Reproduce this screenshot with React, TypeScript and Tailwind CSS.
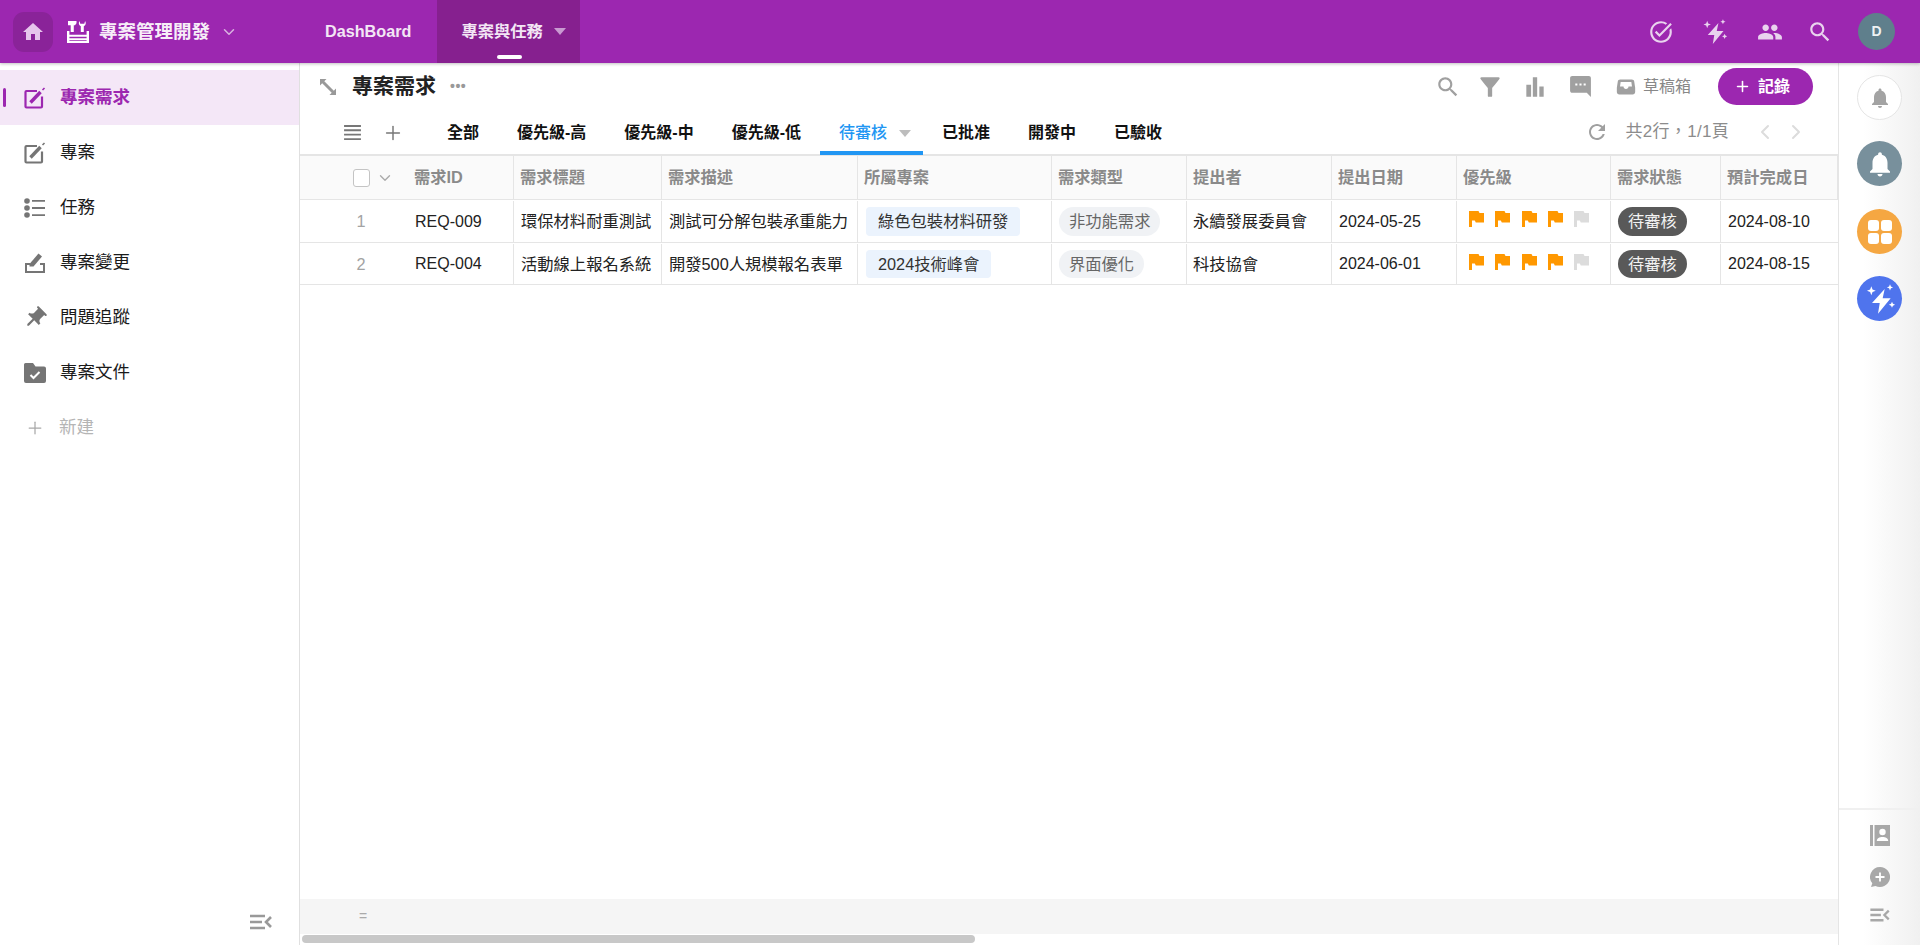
import React from "react";
import { ChevronDown, ChevronLeft, ChevronRight, Plus } from "lucide-react";

/* -------------------------------------------------------------------------- */
/*                                    Icons                                   */
/* -------------------------------------------------------------------------- */
type IconProps = { className?: string };

const Mat = ({ d, className }: IconProps & { d: string }) => (
  <svg viewBox="0 0 24 24" fill="currentColor" className={className}>
    <path d={d} />
  </svg>
);

const HomeIcon = ({ className }: IconProps) => <Mat className={className} d="M10 20v-6h4v6h5v-8h3L12 3 2 12h3v8z" />;
const TaskAlt = ({ className }: IconProps) => (
  <Mat
    className={className}
    d="M22 5.18 10.59 16.6l-4.24-4.24 1.41-1.41 2.83 2.83 10-10L22 5.18zm-2.21 5.04c.13.57.21 1.17.21 1.78 0 4.42-3.58 8-8 8s-8-3.58-8-8 3.58-8 8-8c1.58 0 3.04.46 4.28 1.25l1.44-1.44C16.1 2.67 14.13 2 12 2 6.48 2 2 6.48 2 12s4.48 10 10 10 10-4.48 10-10c0-1.19-.22-2.33-.6-3.39l-1.61 1.61z"
  />
);
const PeopleIcon = ({ className }: IconProps) => (
  <Mat
    className={className}
    d="M16 11c1.66 0 2.99-1.34 2.99-3S17.66 5 16 5c-1.66 0-3 1.34-3 3s1.34 3 3 3zm-8 0c1.66 0 2.99-1.34 2.99-3S9.66 5 8 5C6.34 5 5 6.34 5 8s1.34 3 3 3zm0 2c-2.33 0-7 1.17-7 3.5V19h14v-2.5c0-2.33-4.67-3.5-7-3.5zm8 0c-.29 0-.62.02-.97.05 1.16.84 1.97 1.97 1.97 3.45V19h6v-2.5c0-2.33-4.67-3.5-7-3.5z"
  />
);
const SearchIcon = ({ className }: IconProps) => (
  <Mat
    className={className}
    d="M15.5 14h-.79l-.28-.27C15.41 12.59 16 11.11 16 9.5 16 5.91 13.09 3 9.5 3S3 5.91 3 9.5 5.91 16 9.5 16c1.61 0 3.09-.59 4.23-1.57l.27.28v.79l5 4.99L20.49 19l-4.99-5zm-6 0C7.01 14 5 11.99 5 9.5S7.01 5 9.5 5 14 7.01 14 9.5 11.99 14 9.5 14z"
  />
);
const FilterIcon = ({ className }: IconProps) => (
  <Mat
    className={className}
    d="M3.3 4.6C5.5 7.4 10 13 10 13v7.2c0 .5.3.8.8.8h2.4c.5 0 .8-.3.8-.8V13s4.5-5.6 6.7-8.4c.5-.7.1-1.6-.8-1.6H4.1c-.9 0-1.3.9-.8 1.6z"
  />
);
const BarsIcon = ({ className }: IconProps) => <Mat className={className} d="M4 10h4.4v11H4zM10 3h4v18h-4zm6 8.5h4V21h-4z" />;
const ChatIcon = ({ className }: IconProps) => (
  <svg viewBox="0 0 24 24" fill="currentColor" className={className}>
    <path d="M4 2h16c1.1 0 2 .9 2 2l.01 18-4-4H4c-1.1 0-2-.9-2-2V4c0-1.1.9-2 2-2zm3 7v2h2V9H7zm4 0v2h2V9h-2zm4 0v2h2V9h-2z" fillRule="evenodd" />
  </svg>
);
const TrayIcon = ({ className }: IconProps) => (
  <svg viewBox="0 0 24 24" fill="currentColor" className={className}>
    <path d="M5 3h14c1.6 0 2.6 1 2.8 2.2L23 13v5c0 1.7-1.3 3-3 3H4c-1.7 0-3-1.3-3-3v-5l1.2-7.800C2.400 4 3.400 3 5 3zm.600 3L4.800 11.500H9c0 1.600 1.300 2.800 3 2.800s3-1.200 3-2.800h4.200L18.400 6H5.600z" fillRule="evenodd" />
  </svg>
);
const RefreshIcon = ({ className }: IconProps) => (
  <Mat
    className={className}
    d="M17.65 6.35C16.2 4.9 14.21 4 12 4c-4.42 0-7.99 3.58-7.99 8s3.57 8 7.99 8c3.73 0 6.84-2.55 7.73-6h-2.08c-.82 2.33-3.04 4-5.65 4-3.31 0-6-2.69-6-6s2.69-6 6-6c1.66 0 3.14.69 4.22 1.78L13 11h7V4l-2.35 2.35z"
  />
);
const BellIcon = ({ className }: IconProps) => (
  <Mat
    className={className}
    d="M12 22c1.100 0 2-.9 2-2h-4c0 1.100.89 2 2 2zm6-6v-5c0-3.070-1.640-5.640-4.500-6.320V4c0-.83-.67-1.500-1.500-1.500s-1.500.67-1.500 1.500v.68C7.630 5.360 6 7.920 6 11v5l-2 2v1h16v-1l-2-2z"
  />
);
const BoltSparkIcon = ({ className }: IconProps) => (
  <svg viewBox="0 0 24 24" fill="currentColor" className={className}>
    <path d="M10.500 23 11.800 15H6L15.500 4.500 14 11.500H20z" />
    <path d="M5.500 2.500l.9 2.400 2.400.9-2.400.9-.9 2.400-.9-2.400-2.400-.9 2.400-.9zM19.500 1l.7 1.600 1.600.7-1.600.7-.7 1.600-.7-1.600-1.600-.7 1.600-.7zM21 14l.7 1.600 1.600.7-1.600.7-.7 1.600-.7-1.600-1.600-.7 1.600-.7z" />
  </svg>
);
const FlagIcon = ({ className }: IconProps) => (
  <svg viewBox="0 0 15 16" fill="currentColor" className={className}>
    <path d="M0 0h9.500l1 2H15v9.500H6.800l-1-2H3V16H0z" />
  </svg>
);
const EditIcon = ({ className }: IconProps) => (
  <svg viewBox="0 0 22 22" fill="none" stroke="currentColor" className={className}>
    <path d="M13 4H2.500a1 1 0 0 0-1 1v14.500a1 1 0 0 0 1 1H17a1 1 0 0 0 1-1V9.500" strokeWidth="2.200" />
    <path d="M6.500 15.500 16.500 5" strokeWidth="3.400" />
    <path d="M18.500 3 20.500 1" strokeWidth="1.600" />
  </svg>
);
const ListIcon = ({ className }: IconProps) => (
  <svg viewBox="0 0 22 20" fill="currentColor" className={className}>
    <circle cx="3" cy="3" r="2.800" />
    <circle cx="3" cy="10" r="2.800" />
    <circle cx="3" cy="17" r="2.800" />
    <path d="M8 2h13v1.800H8zM8 9.100h13v1.800H8zM8 16.200h13V18H8z" />
  </svg>
);
const ChangeIcon = ({ className }: IconProps) => (
  <svg viewBox="0 0 22 22" fill="currentColor" className={className}>
    <path d="M1 11h5.500v2H3v6h16v-6h-3v-2h5v10H1z" />
    <path d="M5.500 14.500V12L14.500 1.500l3.500 3-8.500 10z" />
  </svg>
);
const PinIcon = ({ className }: IconProps) => (
  <svg viewBox="0 0 24 24" fill="currentColor" className={className}>
    <path
      transform="rotate(45 12 12)"
      d="M16 9V4h1c.55 0 1-.45 1-1s-.45-1-1-1H7c-.55 0-1 .45-1 1s.45 1 1 1h1v5c0 1.660-1.340 3-3 3v2h5.970v7l1 1 1-1v-7H19v-2c-1.660 0-3-1.340-3-3z"
    />
  </svg>
);
const FolderCheckIcon = ({ className }: IconProps) => (
  <svg viewBox="0 0 22 20" fill="none" className={className}>
    <path d="M1.500 0H9l2.500 3.500H20a2 2 0 0 1 2 2V18a2 2 0 0 1-2 2H2a2 2 0 0 1-2-2V1.500A1.500 1.500 0 0 1 1.500 0z" fill="currentColor" />
    <path d="M6.500 12l3 3 6-6" stroke="#fff" strokeWidth="2" />
  </svg>
);
const CollapseIcon = ({ className }: IconProps) => (
  <svg viewBox="0 0 22 16" fill="none" stroke="currentColor" strokeWidth="2.600" className={className}>
    <path d="M0 2h15M0 8h12M0 14h15M21 3l-5 5 5 5" />
  </svg>
);
const LogoIcon = ({ className }: IconProps) => (
  <svg viewBox="0 0 22 22" fill="currentColor" className={className}>
    <path d="M1 0h8.500v2.200L8 4.200H6.800V11H3.700V4.200H1z" />
    <path d="M12.500 0c-1.200 2-.8 4.200 1.300 5.300V11h3V5.300c2.100-1.100 2.500-3.300 1.300-5.300l-.8 2.800h-4z" />
    <path d="M0 10h2.400v3.800h17.200V10H22v12H0zm2.400 5.800v1.400h17.200v-1.400zm0 3.200v.8h17.200V19z" fillRule="evenodd" />
  </svg>
);
const ContactIcon = ({ className }: IconProps) => (
  <svg viewBox="0 0 20 21" className={className}>
    <path d="M0 0h3v21H0zM4.500 0H20v21H4.500z" fill="currentColor" />
    <circle cx="12.500" cy="7" r="3.200" fill="#fff" />
    <path d="M6.800 16c0-2.800 2.600-4 5.700-4s5.700 1.200 5.700 4z" fill="#fff" />
  </svg>
);
const AddChatIcon = ({ className }: IconProps) => (
  <svg viewBox="0 0 20 20" className={className}>
    <path d="M10 0a10 10 0 1 1-4.500 18.900L1 20l1.300-3.700A10 10 0 0 1 10 0z" fill="currentColor" />
    <path d="M10 5.500v9M5.500 10h9" stroke="#fff" strokeWidth="1.800" />
  </svg>
);
const ExpandIcon = ({ className }: IconProps) => (
  <svg viewBox="0 0 18 18" fill="currentColor" className={className}>
    <path d="M1 1h6.500L5.300 3.200l9.500 9.500L17 10.500V17h-6.500l2.200-2.200-9.500-9.500L1 7.500z" />
  </svg>
);

/* -------------------------------------------------------------------------- */
/*                                    Data                                    */
/* -------------------------------------------------------------------------- */
const sideItems = [
  { label: "專案", Icon: EditIcon, iconClass: "mr-[14px] h-[22px] w-[22px]" },
  { label: "任務", Icon: ListIcon, iconClass: "mr-[14px] h-[22px] w-[22px]" },
  { label: "專案變更", Icon: ChangeIcon, iconClass: "mr-[14px] h-[22px] w-[22px]" },
  { label: "問題追蹤", Icon: PinIcon, iconClass: "-ml-[2px] mr-[12px] h-[26px] w-[26px]" },
  { label: "專案文件", Icon: FolderCheckIcon, iconClass: "mr-[14px] h-[22px] w-[22px]" },
];

const headers = [
  { label: "需求標題", width: "w-[148px]" },
  { label: "需求描述", width: "w-[196px]" },
  { label: "所屬專案", width: "w-[194px]" },
  { label: "需求類型", width: "w-[135px]" },
  { label: "提出者", width: "w-[145px]" },
  { label: "提出日期", width: "w-[125px]" },
  { label: "優先級", width: "w-[154px]" },
  { label: "需求狀態", width: "w-[110px]" },
  { label: "預計完成日", width: "w-[117px]" },
];

const rows = [
  {
    no: 1,
    id: "REQ-009",
    title: "環保材料耐重測試",
    desc: "測試可分解包裝承重能力",
    project: "綠色包裝材料研發",
    type: "非功能需求",
    owner: "永續發展委員會",
    date: "2024-05-25",
    due: "2024-08-10",
  },
  {
    no: 2,
    id: "REQ-004",
    title: "活動線上報名系統",
    desc: "開發500人規模報名表單",
    project: "2024技術峰會",
    type: "界面優化",
    owner: "科技協會",
    date: "2024-06-01",
    due: "2024-08-15",
  },
];

const tabsBefore = ["全部", "優先級-高", "優先級-中", "優先級-低"];
const tabsAfter = ["已批准", "開發中", "已驗收"];

const FONT = "font-['Liberation_Sans','Noto_Sans_CJK_TC',sans-serif]";

const App = () => {
  return (
    <div className={`flex h-screen w-full flex-col overflow-hidden bg-white ${FONT}`}>
      {/* top bar starts */}
      <header className="relative z-10 flex h-[63px] shrink-0 items-stretch bg-[#9c27b0] pl-[13px] pr-[25px] shadow-[0_1px_3px_rgba(0,0,0,0.25)]">
        <div className="flex items-center">
          <div className="flex h-10 w-10 items-center justify-center rounded-[11px] bg-[#8a2399]">
            <HomeIcon className="h-6 w-6 text-[#e6c5ec]" />
          </div>
          <LogoIcon className="ml-[14px] h-[22px] w-[22px] text-white" />
          <span className="ml-[10px] text-[18.500px] font-bold text-[#f7eef8]">專案管理開發</span>
          <ChevronDown className="ml-[10px] h-[18px] w-[18px] text-[#d9b3e0]" strokeWidth={2} />
        </div>
        <nav className="ml-[87px] flex items-stretch">
          <div className="flex items-center text-[16.200px] font-bold text-[#f3e6f5]">DashBoard</div>
          <div className="relative ml-[26px] flex w-[143px] items-center bg-[#86208f] pl-[24px] text-[16.300px] font-bold text-[#f3e6f5]">
            專案與任務
            <span className="ml-[11px] h-0 w-0 border-x-[6px] border-t-[7px] border-x-transparent border-t-[#c99ad1]" />
            <span className="absolute bottom-[4px] left-[60px] h-1 w-[25px] rounded-full bg-white" />
          </div>
        </nav>
        <div className="ml-auto flex items-center text-[#e9d3ee]">
          <TaskAlt className="h-[26px] w-[26px]" />
          <BoltSparkIcon className="ml-[27px] h-[27px] w-[27px]" />
          <PeopleIcon className="ml-[29px] h-[26px] w-[26px]" />
          <SearchIcon className="ml-[24px] h-[26px] w-[26px]" />
          <div className="ml-[25px] flex h-[37px] w-[37px] items-center justify-center rounded-full bg-[#5f7f8c] text-[14px] font-bold text-[#eef2f3]">
            D
          </div>
        </div>
      </header>
      {/* top bar ends */}

      <div className="flex min-h-0 flex-1">
        {/* sidebar starts */}
        <aside className="flex w-[300px] shrink-0 flex-col border-r border-[#e0e0e0] pt-[7px]">
          <div className="relative flex h-[55px] items-center bg-[#f4e7f7] pl-[24px] text-[17.500px] font-bold text-[#9c27b0]">
            <span className="absolute left-[3px] top-[18px] h-[19px] w-[3px] rounded-full bg-[#9c27b0]" />
            <EditIcon className="mr-[14px] h-[22px] w-[22px]" />
            專案需求
          </div>
          {sideItems.map(({ label, Icon, iconClass }) => (
            <div key={label} className="flex h-[55px] items-center pl-[24px] text-[17.500px] text-[#1a1a1a]">
              <Icon className={`text-[#757575] ${iconClass}`} />
              {label}
            </div>
          ))}
          <div className="flex h-[55px] items-center pl-[25px] text-[17.500px] text-[#b5b5b5]">
            <Plus className="mr-[14px] h-[20px] w-[20px] text-[#a8a8a8]" strokeWidth={1.5} />
            新建
          </div>
          <div className="mt-auto flex justify-end pb-[15px] pr-[27px]">
            <CollapseIcon className="h-[16px] w-[22px] text-[#999]" />
          </div>
        </aside>
        {/* sidebar ends */}

        {/* content starts */}
        <main className="flex min-w-0 flex-1 flex-col">
          <div className="flex h-[42px] items-center pl-[19px] pr-[25px] pt-[5px]">
            <ExpandIcon className="h-[18px] w-[18px] text-[#999]" />
            <span className="-mt-[2px] ml-[15px] text-[21px] font-bold leading-none text-[#222]">專案需求</span>
            <span className="-mt-[2px] ml-[14px] text-[14px] font-bold leading-none tracking-[0.5px] text-[#999]">•••</span>
            <div className="ml-auto flex items-center text-[#a0a0a0]">
              <SearchIcon className="-mr-[1px] h-[26px] w-[26px]" />
              <FilterIcon className="ml-[17px] h-[26px] w-[26px]" />
              <BarsIcon className="ml-[19px] h-[26px] w-[26px]" />
              <ChatIcon className="ml-[20px] h-[25px] w-[25px]" />
              <TrayIcon className="ml-[23px] h-[20px] w-[20px]" />
              <span className="ml-[7px] text-[16px] text-[#888]">草稿箱</span>
              <button className="ml-[27px] flex h-[37px] w-[95px] items-center justify-center gap-[7px] rounded-full bg-[#9c27b0] pr-[7px] text-[16px] font-bold text-white">
                <Plus className="h-[17px] w-[17px]" strokeWidth={2.2} />
                記錄
              </button>
            </div>
          </div>

          {/* tabs starts */}
          <div className="flex h-[51px] items-stretch border-b-2 border-[#e5e5e5] pr-[30px]">
            <div className="flex w-[128px] items-center pl-[43px] pt-[6px]">
              <svg viewBox="0 0 18 16" fill="currentColor" className="h-[15px] w-[19px] text-[#777]">
                <path d="M0 0h18v2H0zM0 4.600h18v2H0zM0 9.300h18v2H0zM0 14h18v2H0z" />
              </svg>
              <Plus className="ml-[20px] h-[22px] w-[22px] text-[#777]" strokeWidth={1.6} />
            </div>
            {tabsBefore.map((tab) => (
              <div key={tab} className="flex items-center px-[19px] pt-[7px] text-[16px] font-bold text-[#111]">
                {tab}
              </div>
            ))}
            <div className="relative flex w-[103px] items-center pl-[19px] pt-[7px] text-[16px] font-medium text-[#2196f3]">
              待審核
              <span className="ml-[12px] h-0 w-0 border-x-[6px] border-t-[7px] border-x-transparent border-t-[#bdbdbd]" />
              <span className="absolute bottom-[-1px] left-0 h-1 w-full bg-[#2196f3]" />
            </div>
            {tabsAfter.map((tab) => (
              <div key={tab} className="flex items-center px-[19px] pt-[7px] text-[16px] font-bold text-[#111]">
                {tab}
              </div>
            ))}
            <div className="ml-auto flex items-center pt-[5px] text-[#a0a0a0]">
              <RefreshIcon className="h-[24px] w-[24px]" />
              <span className="ml-[17px] text-[17px] tracking-[0.3px] text-[#8c8c8c]">共2行，1/1頁</span>
              <ChevronLeft className="ml-[24px] h-[24px] w-[24px] text-[#dcdcdc]" strokeWidth={2} />
              <ChevronRight className="ml-[7px] h-[24px] w-[24px] text-[#dcdcdc]" strokeWidth={2} />
            </div>
          </div>
          {/* tabs ends */}

          {/* table starts */}
          <div className="min-h-0 flex-1">
            <div className="flex h-[43px] bg-[#fafafa]">
              <div className="flex w-[214px] shrink-0 items-center border-r border-[#e5e5e5] pl-[53px]">
                <span className="h-[18px] w-[17px] rounded-[3px] border border-[#c4c4c4] bg-white" />
                <ChevronDown className="ml-[6px] h-[18px] w-[18px] text-[#aaa]" strokeWidth={1.8} />
                <span className="ml-[20px] text-[16.300px] font-bold text-[#8a8a8a]">需求ID</span>
              </div>
              {headers.map((h) => (
                <div
                  key={h.label}
                  className={`flex shrink-0 items-center border-r border-[#e5e5e5] pl-[6px] text-[16.300px] font-bold text-[#8a8a8a] ${h.width}`}
                >
                  {h.label}
                </div>
              ))}
            </div>
            {rows.map((row) => (
              <div key={row.id} className="flex h-[43px] border-t border-[#e5e5e5] pt-[1px] text-[16.300px] text-[#222] last:border-b">
                <div className="flex w-[214px] shrink-0 items-center border-r border-[#e5e5e5]">
                  <span className="w-[124px] pr-[2px] text-center text-[#a3a3a3]">{row.no}</span>
                  <span className="-ml-[9px] text-[16px]">{row.id}</span>
                </div>
                <div className="flex w-[148px] shrink-0 items-center border-r border-[#e5e5e5] pl-[7px]">{row.title}</div>
                <div className="flex w-[196px] shrink-0 items-center border-r border-[#e5e5e5] pl-[7px]">{row.desc}</div>
                <div className="flex w-[194px] shrink-0 items-center border-r border-[#e5e5e5] pl-[8px]">
                  <span className="rounded-[4px] bg-[#ebf3fd] px-[12px] py-[2px] text-[#333]">{row.project}</span>
                </div>
                <div className="flex w-[135px] shrink-0 items-center border-r border-[#e5e5e5] pl-[7px]">
                  <span className="rounded-full bg-[#f0f2f5] px-[10px] py-[2px] text-[#666]">{row.type}</span>
                </div>
                <div className="flex w-[145px] shrink-0 items-center border-r border-[#e5e5e5] pl-[6px]">{row.owner}</div>
                <div className="flex w-[125px] shrink-0 items-center border-r border-[#e5e5e5] pl-[7px] text-[16px]">{row.date}</div>
                <div className="flex w-[154px] shrink-0 items-center gap-[11.300px] border-r border-[#e5e5e5] pb-[5px] pl-[12px]">
                  {[0, 1, 2, 3].map((i) => (
                    <FlagIcon key={i} className="h-[16px] w-[15px] text-[#ff9800]" />
                  ))}
                  <FlagIcon className="h-[16px] w-[15px] text-[#dcdcdc]" />
                </div>
                <div className="flex w-[110px] shrink-0 items-center border-r border-[#e5e5e5] pl-[7px]">
                  <span className="rounded-full bg-[#595959] px-[10px] py-[2px] text-[#f2f2f2]">待審核</span>
                </div>
                <div className="flex w-[116px] shrink-0 items-center pl-[7px] text-[16px]">{row.due}</div>
              </div>
            ))}
          </div>
          {/* table ends */}

          <div className="flex h-[35px] shrink-0 items-center bg-[#f5f5f5] pl-[59px] text-[14px] text-[#aaa]">=</div>
          <div className="h-[11px] shrink-0 pl-[2px] pt-[1px]">
            <div className="h-2 w-[673px] rounded-full bg-[#c8c8c8]" />
          </div>
        </main>
        {/* content ends */}

        {/* right rail starts */}
        <aside className="flex w-[82px] shrink-0 flex-col items-center border-l border-[#e5e5e5] bg-gradient-to-r from-white via-white via-30% to-[#f0f0f0] pt-[12px]">
          <div className="flex h-[45px] w-[45px] items-center justify-center rounded-full border border-[#e5e5e5] bg-white">
            <BellIcon className="h-[24px] w-[24px] text-[#a3a3a3]" />
          </div>
          <div className="mt-[21px] flex h-[45px] w-[45px] items-center justify-center rounded-full bg-[#78909c]">
            <BellIcon className="h-[30px] w-[30px] text-white" />
          </div>
          <div className="mt-[23px] flex h-[45px] w-[45px] items-center justify-center rounded-full bg-[#f5a742]">
            <div className="grid grid-cols-2 gap-[2px]">
              <span className="h-[11px] w-[11px] rounded-[3px] bg-white" />
              <span className="h-[11px] w-[11px] rounded-[3px] bg-white" />
              <span className="h-[11px] w-[11px] rounded-[3px] bg-white" />
              <span className="h-[11px] w-[11px] rounded-[3px] bg-white" />
            </div>
          </div>
          <div className="mt-[22px] flex h-[45px] w-[45px] items-center justify-center rounded-full bg-[#4f74ed]">
            <BoltSparkIcon className="h-[32px] w-[32px] text-white" />
          </div>
          <div className="mt-auto flex w-full flex-col items-center gap-[21px] border-t-2 border-[#f0f0f0] pb-[23px] pt-[15px] text-[#a8a8a8]">
            <ContactIcon className="h-[21px] w-[20px]" />
            <AddChatIcon className="h-[20px] w-[20px]" />
            <CollapseIcon className="h-[14px] w-[20px]" />
          </div>
        </aside>
        {/* right rail ends */}
      </div>
    </div>
  );
};

export default App;
